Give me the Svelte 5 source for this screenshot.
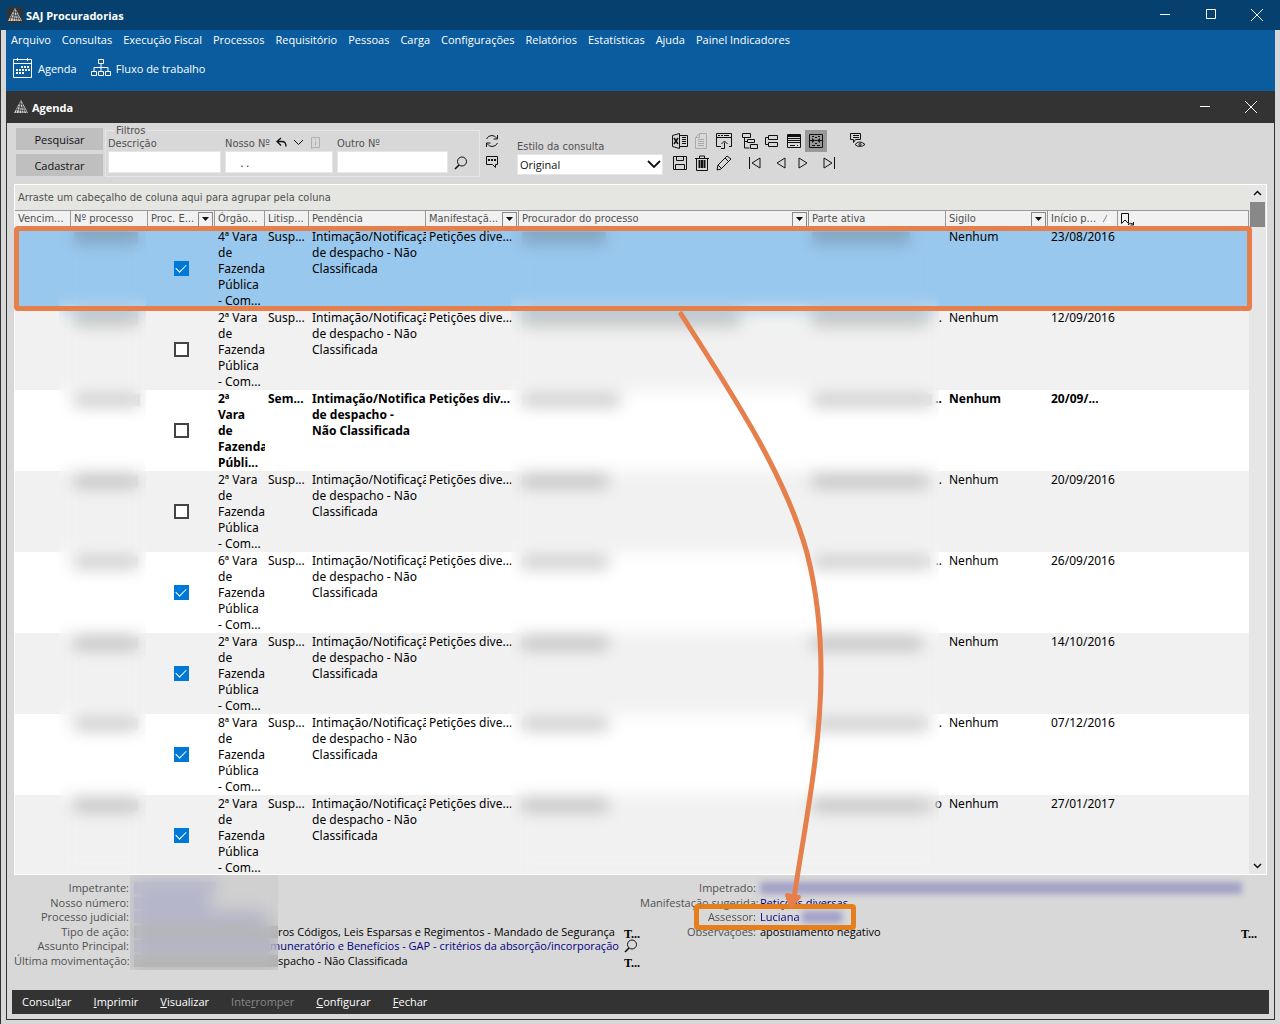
<script lang="ts">
	interface Row {
		hidden: number;
		checked: boolean;
		court: string;
		litis: string;
		task: string;
		manifest: string;
		attorney: number;
		party: number;
		tail: string;
		date: string;
		bold?: boolean;
	}

	const menus = [
		"Arquivo",
		"Consultas",
		"Execução Fiscal",
		"Processos",
		"Requisitório",
		"Pessoas",
		"Carga",
		"Configurações",
		"Relatórios",
		"Estatísticas",
		"Ajuda",
		"Painel Indicadores",
	];

	const columns = [
		{ label: "Vencim...", key: "due" },
		{ label: "Nº processo", key: "number" },
		{ label: "Proc. E...", key: "electronic", filter: true },
		{ label: "Órgão...", key: "court" },
		{ label: "Litisp...", key: "litis" },
		{ label: "Pendência", key: "task" },
		{ label: "Manifestaçã...", key: "manifest", filter: true },
		{ label: "Procurador do processo", key: "attorney", filter: true },
		{ label: "Parte ativa", key: "party" },
		{ label: "Sigilo", key: "secrecy", filter: true },
		{ label: "Início p...", key: "start", sorted: true },
		{ label: "", key: "mark", mark: true },
	];

	const court = (n: number) => `${n}ª Vara\nde\nFazenda\nPública\n- Com...`;
	const task = "Intimação/Notificaçã\nde despacho - Não\nClassificada";

	const makeRow = (
		n: number,
		checked: boolean,
		date: string,
		attorney: number,
		party: number,
		tail = "",
	): Row => ({
		hidden: 64,
		checked,
		court: court(n),
		litis: "Susp...",
		task,
		manifest: "Petições dive...",
		attorney,
		party,
		tail,
		date,
	});

	let rows = $state<Row[]>([
		makeRow(4, true, "23/08/2016", 84, 98),
		makeRow(2, false, "12/09/2016", 218, 116, "."),
		{
			hidden: 66,
			checked: false,
			court: "2ª\nVara\nde\nFazenda\nPúbli...",
			litis: "Sem...",
			task: "Intimação/Notifica\nde despacho -\nNão Classificada",
			manifest: "Petições div...",
			attorney: 98,
			party: 120,
			tail: "..",
			date: "20/09/...",
			bold: true,
		},
		makeRow(2, false, "20/09/2016", 86, 116, "."),
		makeRow(6, true, "26/09/2016", 86, 118, ".."),
		makeRow(2, true, "14/10/2016", 86, 110),
		makeRow(8, true, "07/12/2016", 86, 116, "."),
		makeRow(2, true, "27/01/2017", 86, 116, "o"),
	]);

	const leftDetails = [
		{ label: "Impetrante:", hidden: 82, link: true },
		{ label: "Nosso número:", hidden: 76, link: true },
		{ label: "Processo judicial:", hidden: 132, link: true },
		{
			label: "Tipo de ação:",
			hidden: 144,
			value: "ros Códigos, Leis Esparsas e Regimentos - Mandado de Segurança",
			action: "text",
		},
		{
			label: "Assunto Principal:",
			hidden: 136,
			value: "muneratório e Benefícios - GAP - critérios da absorção/incorporação",
			link: true,
			action: "search",
		},
		{
			label: "Última movimentação:",
			hidden: 144,
			value: "spacho - Não Classificada",
			action: "text",
		},
	];

	const commands = [
		{ before: "Consul", key: "t", after: "ar" },
		{ before: "", key: "I", after: "mprimir" },
		{ before: "", key: "V", after: "isualizar" },
		{ before: "Inte", key: "r", after: "romper", disabled: true },
		{ before: "", key: "C", after: "onfigurar" },
		{ before: "", key: "F", after: "echar" },
	];
</script>

{#snippet logo()}
	<svg class="logo" width="16" height="16" viewBox="0 0 16 16" aria-hidden="true">
		<rect width="16" height="16" fill="#333" />
		<path d="M8 1 15 14H1z" fill="#d6d6d6" />
		<path d="M6 4.500 10 5.500M5 7.500l6 1.500M3 10.500l10 1.500M8 2 6 14M9 4l2 10M5 8 3 14M10 7l4 7M7 5 9 14" stroke="#333" stroke-width=".7" />
	</svg>
{/snippet}

{#snippet windowButtons(maximize: boolean)}
	<div class="window-buttons">
		<button type="button" aria-label="Minimizar">
			<svg width="12" height="12" viewBox="0 0 12 12"><path d="M1 5.500h10" /></svg>
		</button>
		{#if maximize}
			<button type="button" aria-label="Maximizar">
				<svg width="12" height="12" viewBox="0 0 12 12"><path d="M1.500 .500h9v9h-9z" /></svg>
			</button>
		{/if}
		<button type="button" aria-label="Fechar janela">
			<svg width="12" height="12" viewBox="0 0 12 12"><path d="m0 0 12 12M12 0 0 12" /></svg>
		</button>
	</div>
{/snippet}

{#snippet magnifier()}
	<svg width="14" height="14" viewBox="0 0 14 14" aria-hidden="true">
		<circle cx="8" cy="5.500" r="4.500" />
		<path d="M5 9 1 13" stroke-width="1.600" />
	</svg>
{/snippet}

{#snippet icon(name: string)}
	<svg width="18" height="18" viewBox="0 0 18 18" aria-hidden="true">
		{#if name === "excel"}
			<path d="M1.500 3.500 8.500 1.500v15l-7-2zM8.500 3.500h8v11h-8M11 5.500h4M11 7.500h4M11 9.500h4M11 11.500h4" />
			<path d="m3 6 4 6M7 6l-4 6" stroke-width="1.600" />
		{:else if name === "page"}
			<path d="M6.500 1.500h7v15h-11v-11zM6.500 1.500v4h-4M5 7.500h6M5 9.500h6M5 11.500h6M5 13.500h6" stroke="#aaa" />
		{:else if name === "export"}
			<path d="M6 14.500H1.500v-13h15v13H14M1.500 5.500h15M3 3.500h2M6 3.500h2M9 3.500h5M6 16.500h3.500v-6M6.500 12l3-3 3 3" />
		{:else if name === "tree"}
			<path d="M1.500 1.500h8v4h-8zM6.500 7.500h7v3h-7zM9.500 12.500h7v4h-7zM3.500 6v10h5M3.500 9.500h3" />
		{:else if name === "split"}
			<path d="M5.500 3.500h9v4h-9zM5.500 10.500h9v4h-9zM5 5.500H2.500v7H5" />
		{:else if name === "list"}
			<path d="M2.500 2.500h13v13h-13zM3 6.500h12M3 8.500h12M3 10.500h12M5 13.500h5M12 13.500h1" />
			<path d="M3 4h12" stroke-width="2" />
		{:else if name === "fit"}
			<path d="M2.500 2.500h13v13h-13zM5 4.500h2M8 5.500h2M11 4.500h2M5 13.500h3M10 13.500h3M3 8.500h3M12 8.500h3M8 8.500h2M8 11.500h2" />
			<path d="m5 6 3 2.500L5 11zM13 6l-3 2.500 3 2.500z" fill="#111" stroke="none" />
		{:else if name === "watch"}
			<path d="M1.500 1.500h10v6h-5l-2 3v-3h-3zM4 3.500h6M4 5.500h6M6 12.500q4.500-5 10 0-5.500 4-10 0z" />
			<circle cx="11" cy="12.500" r="1" />
		{:else if name === "save"}
			<path d="M2.500 2.500h13v13h-13zM5.500 2.500v4h7v-4M4.500 15.500v-5h9v5" />
		{:else if name === "trash"}
			<path d="M3.500 4.500h11v12h-11zM2 4.500h14M6.500 4v-2h5v2" />
			<path d="M6.500 6v8M9 6v8M11.500 6v8" stroke-width="2" />
		{:else if name === "pencil"}
			<path d="m2 16 1-5L12 2l4 3-10 10zM3 11l4 4M10 4l4 4" />
		{:else if name === "first"}
			<path d="M3.500 3v12M14 4v10L6 9z" />
		{:else if name === "previous"}
			<path d="M13 4v10L5 9z" />
		{:else if name === "next"}
			<path d="M5 4v10l8-5z" />
		{:else if name === "last"}
			<path d="M4 4v10l8-5zM14.500 3v12" />
		{/if}
	</svg>
{/snippet}

{#snippet tool(name: string, label: string)}
	<button type="button" class="tool" class:pressed={name === "fit"} disabled={name === "page"} aria-label={label}>
		{@render icon(name)}
	</button>
{/snippet}

<div class="app">
	<header class="title-bar">
		{@render logo()}
		<h1>SAJ Procuradorias</h1>
		{@render windowButtons(true)}
	</header>

	<div class="frame">
		<div class="ribbon">
			<nav class="menu">
				{#each menus as menu}
					<button type="button">{menu}</button>
				{/each}
			</nav>
			<div class="shortcuts">
				<button type="button">
					<svg width="20" height="20" viewBox="0 0 20 20" aria-hidden="true">
						<path d="M.500 1.500h18v18H.500zM1 5.500h17M4.500 0v3M14.500 0v3" />
						<path d="M8 9h9M3 12h14M3 15h9" stroke-width="2" stroke-dasharray="2 1" />
					</svg>
					Agenda
				</button>
				<button type="button">
					<svg width="20" height="20" viewBox="0 0 20 20" aria-hidden="true">
						<path d="M7.500 1.500h5v4h-5zM.500 13.500h5v4h-5zM7.500 13.500h5v4h-5zM14.500 13.500h5v4h-5zM10 6v7M3 13V9.500h14V13" />
					</svg>
					Fluxo de trabalho
				</button>
			</div>
		</div>

		<main class="window">
			<header class="window-title">
				{@render logo()}
				<h2>Agenda</h2>
				{@render windowButtons(false)}
			</header>

			<div class="toolbar">
				<div class="main-actions">
					<button type="button">Pesquisar</button>
					<button type="button">Cadastrar</button>
				</div>

				<fieldset class="filters">
					<legend>Filtros</legend>
					<div class="field description">
						<div class="field-label"><label for="description">Descrição</label></div>
						<input id="description" type="text" />
					</div>
					<div class="field our-number">
						<div class="field-label">
							<label for="our-number">Nosso Nº</label>
							<svg width="46" height="14" viewBox="0 0 46 14" aria-hidden="true">
								<path d="M5 1 1 4.500l4 4M1 4.500h5q4 0 4 5" stroke-width="1.300" />
								<path d="m18 3 4.500 4.500L27 3" />
								<path d="M35.500 .500h8v10h-6l-2 1zM39.500 2v1M39.500 4.500v4" stroke="#b0b0b0" />
							</svg>
						</div>
						<input id="our-number" type="text" value="    . ." />
					</div>
					<div class="field other-number">
						<div class="field-label"><label for="other-number">Outro Nº</label></div>
						<input id="other-number" type="text" />
					</div>
					<button type="button" class="search" aria-label="Buscar">{@render magnifier()}</button>
				</fieldset>

				<div class="side-tools">
					<button type="button" aria-label="Atualizar">
						<svg width="14" height="14" viewBox="0 0 14 14" aria-hidden="true">
							<path d="M1.500 5Q3 1.500 7 1.500q3 0 5 3M12.500 1v4h-4M12.500 9Q11 12.500 7 12.500q-3 0-5-3M1.500 13V9h4" />
						</svg>
					</button>
					<button type="button" aria-label="Comentários">
						<svg width="14" height="14" viewBox="0 0 14 14" aria-hidden="true">
							<path d="M1.500 1.500h11v8h-2v3l-3-3h-6z" />
							<path d="M3 5h8" stroke-width="2" stroke-dasharray="2 1" />
						</svg>
					</button>
				</div>

				<div class="style-field">
					<label for="style">Estilo da consulta</label>
					<div class="select-box">
						<select id="style"><option>Original</option></select>
						<svg width="14" height="8" viewBox="0 0 14 8" aria-hidden="true"><path d="m1 1 6 6 6-6" stroke-width="1.800" /></svg>
					</div>
				</div>

				<div class="tool-rows">
					<div class="tool-row">
						{@render tool("excel", "Exportar para Excel")}
						{@render tool("page", "Documento")}
						{@render tool("export", "Abrir em janela")}
						<span class="gap-small"></span>
						{@render tool("tree", "Expandir grupos")}
						{@render tool("split", "Recolher grupos")}
						{@render tool("list", "Lista")}
						{@render tool("fit", "Ajustar colunas")}
						<span class="gap-large"></span>
						{@render tool("watch", "Acompanhar")}
					</div>
					<div class="tool-row">
						{@render tool("save", "Salvar")}
						{@render tool("trash", "Excluir")}
						{@render tool("pencil", "Editar")}
						<span class="gap-medium"></span>
						{@render tool("first", "Primeiro")}
						<span class="gap-small"></span>
						{@render tool("previous", "Anterior")}
						{@render tool("next", "Próximo")}
						<span class="gap-small"></span>
						{@render tool("last", "Último")}
					</div>
				</div>
			</div>

			<section class="grid">
				<div class="grid-main">
					<p class="group-hint">Arraste um cabeçalho de coluna aqui para agrupar pela coluna</p>
					<div class="grid-body">
						<table>
							<colgroup>
								{#each columns as column}
									<col class={`col-${column.key}`} />
								{/each}
							</colgroup>
							<thead>
								<tr>
									{#each columns as column}
										<th>
											<div class="head-cell">
												<span>{column.label}</span>
												{#if column.filter}
													<button type="button" aria-label={`Filtrar ${column.label}`}>
														<svg width="7" height="4" viewBox="0 0 7 4"><path d="M0 0h7L3.500 4z" /></svg>
													</button>
												{:else if column.sorted}
													<svg class="sort" width="8" height="8" viewBox="0 0 8 8" aria-hidden="true">
														<path d="M0 7.500h7.500L4.500 0" stroke="#fff" /><path d="M0 7.500 4 0" stroke="#888" />
													</svg>
												{:else if column.mark}
													<svg width="16" height="15" viewBox="0 0 16 15" aria-hidden="true">
														<path d="M.500 1.500h7v10L4 8 .500 11.500zM7 13q2-3 5-1M12.500 10v3h-3" />
													</svg>
												{/if}
											</div>
										</th>
									{/each}
								</tr>
							</thead>
							<tbody>
								{#each rows as row, index}
									<tr class:selected={index === 0} class:bold={row.bold}>
										<td></td>
										<td><span class="smudge" style={`width: ${row.hidden}px`}></span></td>
										<td class="check">
											<input type="checkbox" bind:checked={row.checked} aria-label={`Processo eletrônico, linha ${index + 1}`} />
										</td>
										<td>{row.court}</td>
										<td>{row.litis}</td>
										<td>{row.task}</td>
										<td>{row.manifest}</td>
										<td><span class="smudge" style={`width: ${row.attorney}px`}></span></td>
										<td>
											<div class="party">
												<span class="smudge" style={`width: ${row.party}px`}></span>
												<span>{row.tail}</span>
											</div>
										</td>
										<td>Nenhum</td>
										<td>{row.date}</td>
										<td></td>
									</tr>
								{/each}
							</tbody>
						</table>
						<div class="redaction number-redaction"></div>
						<div class="redaction party-redaction"></div>
					</div>
				</div>
				<div class="scrollbar">
					<svg width="9" height="6" viewBox="0 0 9 6" aria-hidden="true"><path d="m1 5 3.500-3.500L8 5" stroke-width="1.500" /></svg>
					<div class="thumb"></div>
					<svg width="9" height="6" viewBox="0 0 9 6" aria-hidden="true"><path d="m1 1 3.500 3.500L8 1" stroke-width="1.500" /></svg>
				</div>
				<div class="row-highlight"></div>
			</section>

			<section class="details">
				<dl class="detail-list left">
					{#each leftDetails as detail}
						<div class="detail">
							<dt>{detail.label}</dt>
							<dd class="covered"><span class="smudge" class:link={detail.link} style={`width: ${detail.hidden}px`}></span></dd>
							<dd class:link={detail.link}>{detail.value ?? ""}</dd>
							{#if detail.action === "text"}
								<dd class="action"><button type="button" aria-label="Ver texto">T...</button></dd>
							{:else if detail.action === "search"}
								<dd class="action"><button type="button" aria-label="Buscar assunto">{@render magnifier()}</button></dd>
							{/if}
						</div>
					{/each}
					<div class="redaction detail-redaction"></div>
				</dl>
				<dl class="detail-list right">
					<div class="detail">
						<dt>Impetrado:</dt>
						<dd class="value"><span class="smudge soft wide"></span></dd>
					</div>
					<div class="detail">
						<dt>Manifestação sugerida:</dt>
						<dd class="value link">Petições diversas</dd>
					</div>
					<div class="detail assessor">
						<dt>Assessor:</dt>
						<dd class="value link">Luciana <span class="smudge soft"></span></dd>
					</div>
					<div class="detail">
						<dt>Observações:</dt>
						<dd class="value">apostilamento negativo</dd>
						<dd class="action"><button type="button" aria-label="Ver observações">T...</button></dd>
					</div>
				</dl>
			</section>

			<footer class="commands">
				{#each commands as command}
					<button type="button" disabled={command.disabled}>{command.before}<u>{command.key}</u>{command.after}</button>
				{/each}
			</footer>
		</main>
	</div>

	<svg class="arrow" width="160" height="604" viewBox="0 0 160 604" aria-hidden="true">
		<path d="M5 4C50 75 108 160 131 243C143 290 145 330 145 362C145 440 128 520 118 588" />
		<path class="arrow-head" d="m111 585 12 2-8 9z" />
	</svg>
</div>

<style>
	:global(body) {
		margin: 0;
		background: #d8d8d8;
	}

	.app {
		position: relative;
		display: flex;
		flex-direction: column;
		height: 100vh;
		overflow: hidden;
		font-family: "Open Sans", "Noto Sans", sans-serif;
		font-size: 11px;
		color: #000;
		background: #d8d8d8;
	}

	.app *,
	.app *::before {
		box-sizing: border-box;
	}

	button,
	input,
	select {
		margin: 0;
		padding: 0;
		border: 0;
		font: inherit;
		color: inherit;
		background: none;
	}

	button {
		white-space: nowrap;
	}

	svg {
		flex: none;
		fill: none;
		stroke: #111;
	}

	.logo {
		stroke: none;
	}

	h1,
	h2 {
		flex: 1;
		margin: 0;
		font-size: 11px;
		font-weight: 700;
	}

	.title-bar {
		display: flex;
		flex: none;
		align-items: center;
		gap: 3px;
		height: 30px;
		padding: 0 0 0 7px;
		color: #fff;
		background: #05406f;
	}

	.window-buttons {
		display: flex;
	}

	.window-buttons button {
		display: grid;
		place-items: center;
		width: 46px;
		height: 30px;
	}

	.window-buttons svg {
		stroke: #fff;
	}

	.frame {
		display: flex;
		flex: 1;
		flex-direction: column;
		min-height: 0;
		padding: 0 5px 4px;
		border-left: 1px solid #333;
	}

	.ribbon {
		flex: none;
		height: 61px;
		padding: 1px 5px 0;
		color: #fff;
		background: #0a5c9e;
	}

	.menu {
		display: flex;
		gap: 11px;
		height: 17px;
	}

	.shortcuts {
		display: flex;
		gap: 14px;
		padding: 9px 2px;
	}

	.shortcuts button {
		display: flex;
		align-items: center;
		gap: 5px;
		height: 22px;
	}

	.shortcuts svg {
		stroke: #fff;
	}

	.window {
		display: flex;
		flex: 1;
		flex-direction: column;
		min-height: 0;
		border: 1px solid #333;
		border-top: 0;
	}

	.window-title {
		display: flex;
		flex: none;
		align-items: center;
		gap: 3px;
		height: 32px;
		padding-left: 6px;
		color: #fff;
		background: #333;
	}

	.toolbar {
		display: flex;
		flex: none;
		height: 61px;
		padding: 1px 9px 0;
		color: #505050;
	}

	label,
	legend,
	.group-hint,
	th {
		font-family: "DejaVu Sans Condensed", "Noto Sans", sans-serif;
		font-size: 11px;
	}

	.main-actions {
		display: flex;
		flex-direction: column;
		gap: 4px;
		width: 87px;
		padding-top: 4px;
	}

	.main-actions button {
		height: 22px;
		color: #111;
		background: #bfbfbf;
	}

	.filters {
		display: flex;
		gap: 4px;
		width: 375px;
		height: 53px;
		margin: 0 0 0 2px;
		padding: 0 2px;
		border: 1px solid #e6e6e6;
	}

	legend {
		margin-left: 6px;
		padding: 0 2px;
		line-height: 13px;
	}

	.description {
		width: 113px;
	}

	.our-number {
		width: 108px;
	}

	.other-number {
		width: 111px;
	}

	.field-label {
		display: flex;
		gap: 6px;
		height: 14px;
		line-height: 14px;
		white-space: nowrap;
	}

	.field input {
		width: 100%;
		height: 22px;
		padding: 0 3px;
		border: 1px solid #e6e6e6;
		color: #111;
		background: #fff;
		white-space: pre;
	}

	.search {
		align-self: flex-end;
		width: 18px;
		height: 24px;
	}

	.side-tools {
		display: flex;
		flex-direction: column;
		gap: 7px;
		padding: 10px 0 0 5px;
	}

	.side-tools button {
		width: 14px;
		height: 14px;
	}

	.side-tools svg {
		display: block;
	}

	.style-field {
		width: 146px;
		margin-left: 18px;
		padding-top: 14px;
		line-height: 15px;
	}

	.select-box {
		position: relative;
		display: flex;
	}

	.select-box svg {
		position: absolute;
		top: 6px;
		right: 2px;
		pointer-events: none;
	}

	select {
		width: 100%;
		height: 21px;
		padding: 0 2px;
		border: 1px solid #e6e6e6;
		appearance: none;
		color: #111;
		background: #fff;
	}

	.tool-rows {
		padding: 6px 0 0 6px;
	}

	.tool-row {
		display: flex;
	}

	.tool {
		display: grid;
		place-items: center;
		width: 22px;
		height: 22px;
	}

	.pressed {
		background: #999;
	}

	.gap-small {
		width: 4px;
	}

	.gap-medium {
		width: 9px;
	}

	.gap-large {
		width: 20px;
	}

	.grid {
		position: relative;
		display: flex;
		flex: 1;
		min-height: 0;
		margin: 0 7px;
		border: 1px solid #fff;
	}

	.grid-main {
		display: flex;
		flex: 1;
		flex-direction: column;
		min-width: 0;
	}

	.group-hint {
		flex: none;
		height: 25px;
		margin: 0;
		padding-left: 3px;
		line-height: 26px;
		color: #505050;
		background: #e5e5e2;
	}

	.grid-body {
		position: relative;
		flex: 1;
		min-height: 0;
		overflow: hidden;
		background: #fff;
	}

	table {
		width: 100%;
		border-spacing: 0;
		border-collapse: separate;
		table-layout: fixed;
		font-family: "Noto Sans", sans-serif;
		font-size: 12px;
		line-height: 16px;
	}

	.col-due {
		width: 56px;
	}

	.col-number {
		width: 77px;
	}

	.col-electronic {
		width: 67px;
	}

	.col-court {
		width: 50px;
	}

	.col-litis {
		width: 44px;
	}

	.col-task {
		width: 117px;
	}

	.col-manifest {
		width: 93px;
	}

	.col-attorney {
		width: 290px;
	}

	.col-party {
		width: 137px;
	}

	.col-secrecy {
		width: 102px;
	}

	.col-start {
		width: 70px;
	}

	th {
		height: 18px;
		padding: 0;
		border-top: 1px solid #999;
		border-right: 1px solid #999;
		border-bottom: 1px solid #999;
		color: #505050;
		background: #f1f1f1;
		font-weight: 400;
		text-align: left;
	}

	.head-cell {
		display: flex;
		align-items: center;
		height: 16px;
		padding-left: 3px;
		overflow: hidden;
		white-space: nowrap;
	}

	.head-cell span {
		flex: 1;
	}

	.head-cell span:empty {
		flex: none;
	}

	.head-cell button {
		display: grid;
		place-items: center;
		width: 15px;
		height: 15px;
		margin-right: 1px;
		border: 1px solid #888;
		background: #f1f1f1;
	}

	.head-cell button svg {
		fill: #111;
		stroke: none;
	}

	.sort {
		margin-right: 6px;
	}

	td {
		height: 81px;
		padding: 1px 0 0 3px;
		overflow: hidden;
		vertical-align: top;
		white-space: pre;
	}

	tr:nth-child(even) td {
		background: #f1f1f1;
	}

	.selected td {
		background: #99c8ee;
	}

	.bold {
		font-weight: 700;
	}

	.check {
		padding: 0;
		text-align: center;
		vertical-align: middle;
	}

	.check input {
		display: block;
		width: 15px;
		height: 15px;
		margin: 0 auto;
		border: 2px solid #444;
		appearance: none;
		background: #fff;
	}

	.check input:checked {
		border-color: #0078d7;
		background: #0078d7;
	}

	.check input:checked::before {
		content: "";
		display: block;
		width: 10px;
		height: 6px;
		margin-top: 1px;
		border-bottom: 1px solid #fff;
		border-left: 1px solid #fff;
		transform: rotate(-45deg);
	}

	.smudge {
		display: inline-block;
		width: 40px;
		height: 12px;
		margin: 3px 0 0;
		vertical-align: top;
		background: rgb(70 70 70 / 32%);
	}

	.party {
		display: flex;
		justify-content: space-between;
		padding-right: 4px;
	}

	.redaction {
		position: absolute;
		backdrop-filter: blur(8px);
	}

	.number-redaction {
		top: 18px;
		bottom: 0;
		left: 44px;
		width: 87px;
	}

	.party-redaction {
		top: 18px;
		bottom: 0;
		left: 496px;
		width: 428px;
	}

	.scrollbar {
		display: flex;
		flex: none;
		flex-direction: column;
		align-items: center;
		width: 17px;
		padding: 5px 1px;
		background: #e6e6e6;
	}

	.thumb {
		width: 15px;
		height: 25px;
		margin: 6px 0 auto;
		background: #888;
	}

	.row-highlight {
		position: absolute;
		top: 41px;
		right: 14px;
		left: -1px;
		height: 85px;
		border: 5px solid #e57f4b;
		border-radius: 4px;
	}

	.details {
		display: flex;
		flex: none;
		height: 115px;
		padding: 6px 7px 0;
		line-height: 14px;
	}

	.detail-list {
		position: relative;
		display: grid;
		align-content: space-between;
		height: 87px;
		margin: 0;
	}

	.detail-list.left {
		width: 626px;
	}

	.detail-list.right {
		flex: 1;
		height: 58px;
	}

	.detail {
		display: flex;
		height: 14px;
		white-space: nowrap;
	}

	dt {
		flex: none;
		width: 115px;
		text-align: right;
		color: #505050;
	}

	.right dt {
		width: 116px;
	}

	dd {
		margin: 0;
	}

	.covered {
		padding-left: 5px;
	}

	.value {
		flex: 1;
		padding-left: 4px;
	}

	.link {
		color: #000080;
	}

	.detail .smudge {
		margin-top: 1px;
	}

	.smudge.link {
		background: rgb(80 80 190 / 32%);
	}

	.smudge.soft {
		background: rgb(60 60 170 / 34%);
		filter: blur(3px);
	}

	.smudge.wide {
		width: 482px;
	}

	.detail-redaction {
		top: -6px;
		bottom: -2px;
		left: 116px;
		width: 148px;
		background: rgb(190 190 190 / 30%);
	}

	.action {
		width: 16px;
		margin-left: auto;
	}

	.action button {
		display: block;
		height: 18px;
		font-family: "Liberation Serif", serif;
		font-size: 12px;
		font-weight: 700;
		line-height: 18px;
	}

	.right .action {
		margin-right: 10px;
	}

	.assessor {
		position: relative;
	}

	.assessor::after {
		content: "";
		position: absolute;
		top: -6px;
		left: 54px;
		width: 162px;
		height: 26px;
		box-sizing: border-box;
		border: 5px solid #e57f1d;
		border-radius: 4px;
	}

	.commands {
		display: flex;
		flex: none;
		gap: 22px;
		height: 24px;
		margin: 0 5px;
		padding: 0 10px 1px;
		margin-bottom: 5px;
		color: #fff;
		background: #333;
	}

	.commands button:disabled {
		color: #888;
	}

	.arrow {
		position: absolute;
		top: 310px;
		left: 676px;
		pointer-events: none;
		stroke: #e57f4b;
		stroke-width: 5px;
		stroke-linecap: round;
	}

	.arrow-head {
		fill: #e57f4b;
		stroke-width: 4px;
		stroke-linejoin: round;
	}
</style>
